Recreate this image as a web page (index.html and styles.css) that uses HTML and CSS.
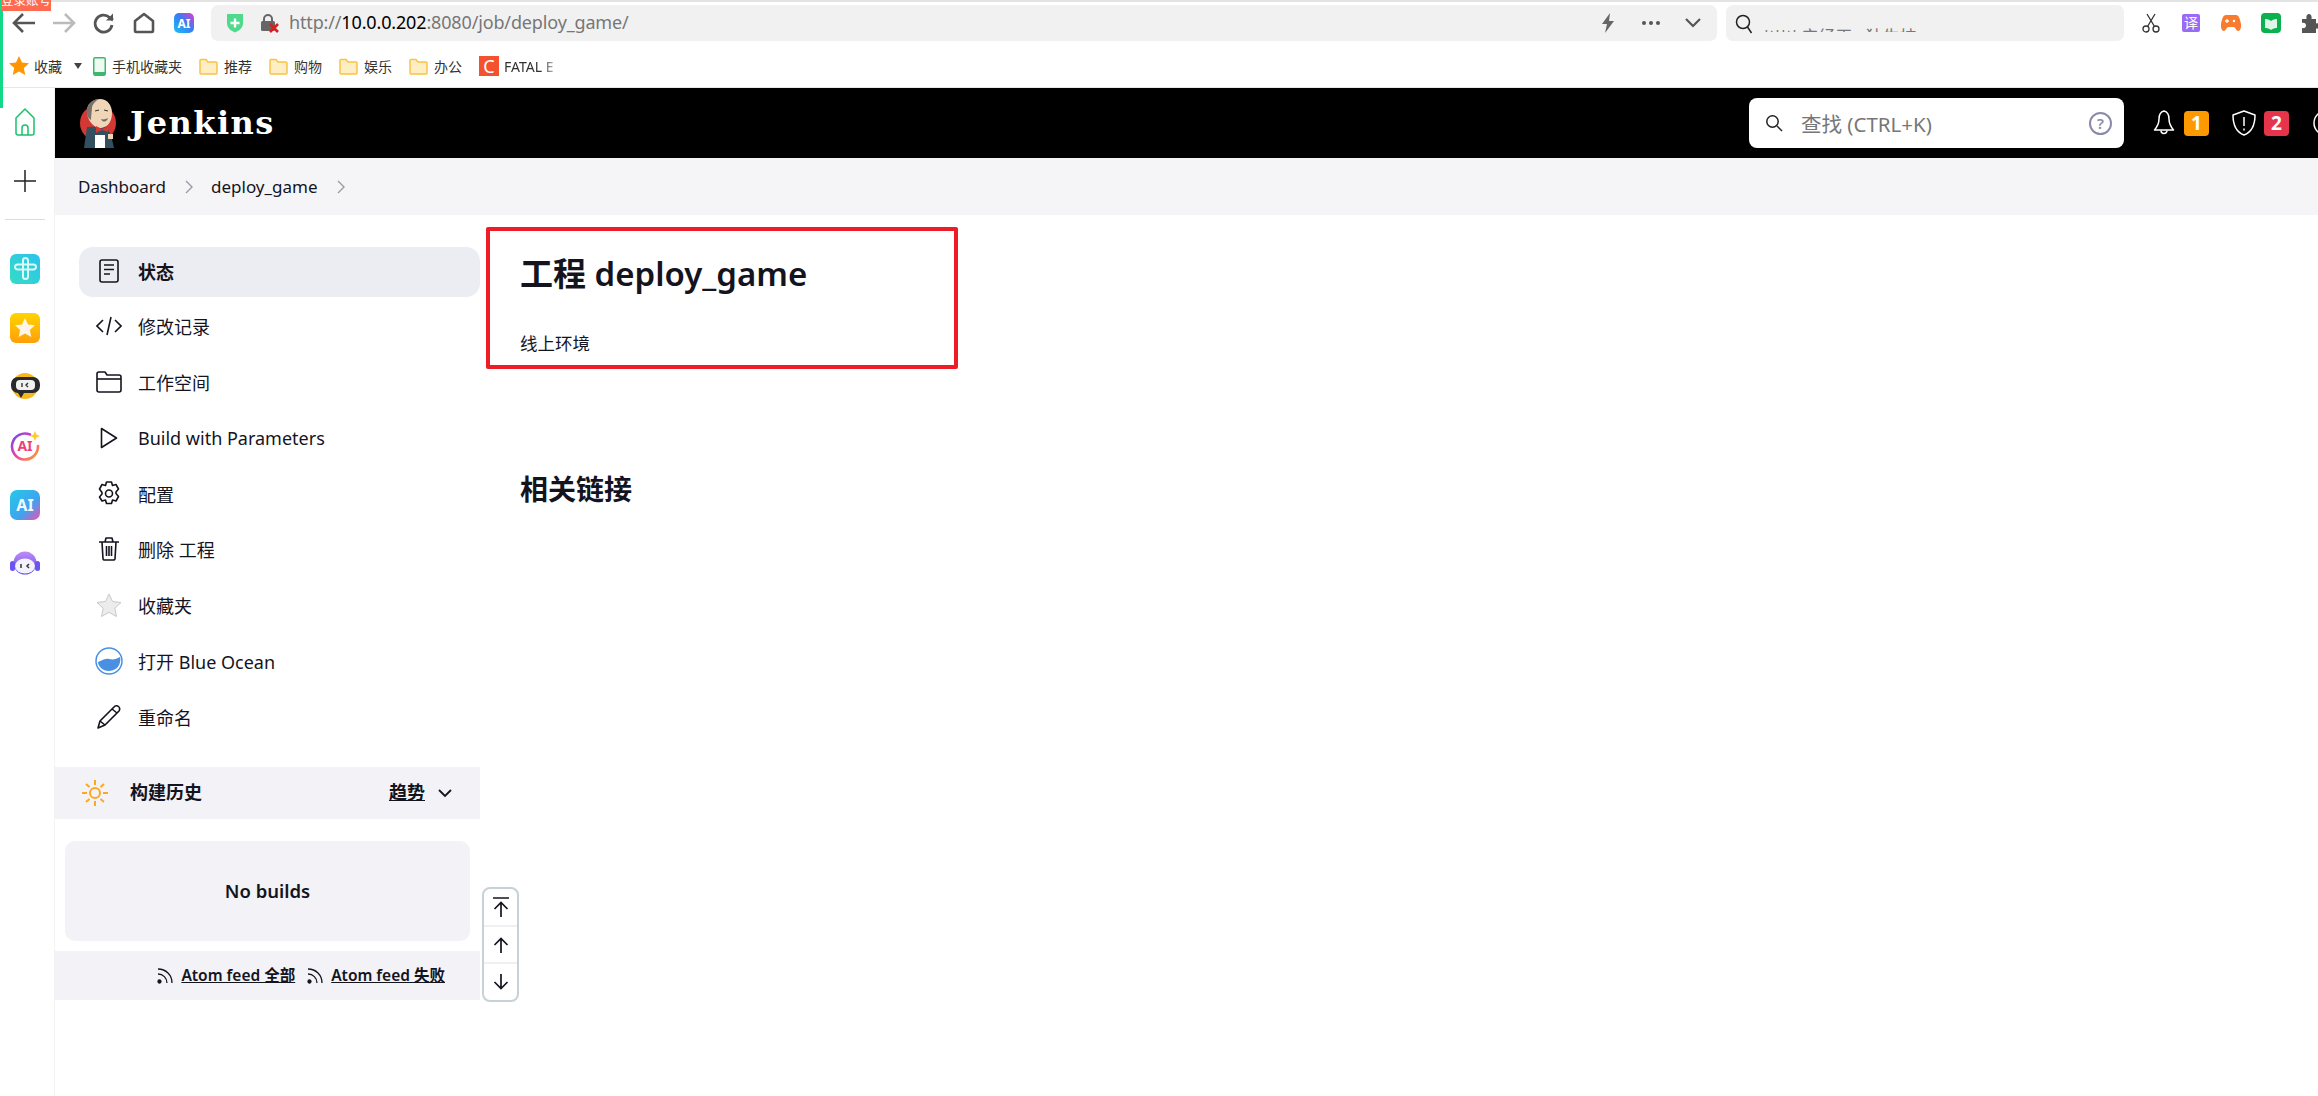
FILE: index.html
```html
<!DOCTYPE html>
<html lang="zh-CN">

<head>
  <meta charset="UTF-8">
  <title>deploy_game - Jenkins</title>
  <link rel="stylesheet" href="styles.css">
</head>

<body>
  <div class="stripe"></div>
  <div class="login-tag"><span>登录账号</span></div>

  <!-- browser toolbar -->
  <div class="toolbar">
    <span class="tb-btn">
      <svg width="28" height="24" viewBox="0 0 28 24" fill="none" stroke="#555" stroke-width="2.6"><path d="M25 12H4M13 3l-9 9 9 9"/></svg>
    </span>
    <span class="tb-btn">
      <svg width="28" height="24" viewBox="0 0 28 24" fill="none" stroke="#bbb" stroke-width="2.6"><path d="M3 12h21M15 3l9 9-9 9"/></svg>
    </span>
    <span class="tb-btn">
      <svg width="24" height="24" viewBox="0 0 24 24" fill="none" stroke="#555" stroke-width="2.8"><path d="M20 14a8.5 8.5 0 1 1-2.5-7.5L21 9"/><path d="M21 2.5v7h-7" fill="#555" stroke="none"/></svg>
    </span>
    <span class="tb-btn">
      <svg width="24" height="24" viewBox="0 0 24 24" fill="none" stroke="#555" stroke-width="2.6" stroke-linejoin="round"><path d="M12 3l9 7v10a1 1 0 0 1-1 1H4a1 1 0 0 1-1-1V10z"/></svg>
    </span>
    <span class="tb-btn">
      <svg width="20" height="20" viewBox="0 0 20 20"><defs><linearGradient id="aiA" x1="0" y1="1" x2="1" y2="0"><stop offset="0" stop-color="#16c3f0"/><stop offset=".55" stop-color="#3b7bf5"/><stop offset="1" stop-color="#e83bc8"/></linearGradient></defs><rect width="20" height="20" rx="5" fill="url(#aiA)"/><text x="10" y="14.5" text-anchor="middle" class="svg-ai" font-size="12" fill="#fff">AI</text></svg>
    </span>

    <div class="urlbar">
      <svg class="url-shield" width="18" height="20" viewBox="0 0 18 20"><path d="M1 1h16v9c0 5-4 8-8 9.5C5 18 1 15 1 10z" fill="#4fd98c"/><path d="M9 5.5v9M4.5 10h9" stroke="#fff" stroke-width="2.4"/></svg>
      <svg class="url-lock" width="20" height="20" viewBox="0 0 20 20"><path d="M4 8V6a4 4 0 0 1 8 0v2" fill="none" stroke="#666" stroke-width="2"/><rect x="1" y="8" width="14" height="10" rx="1.5" fill="#666"/><path d="M10 11l8 8M18 11l-8 8" stroke="#d81e1e" stroke-width="2.6"/></svg>
      <span class="url-text">http://<b>10.0.0.202</b>:8080/job/deploy_game/</span>
      <svg class="url-bolt" width="14" height="20" viewBox="0 0 14 20"><path d="M9 0L1 11h5l-2 9 9-12H8z" fill="#666"/></svg>
      <span class="url-dots"><i></i><i></i><i></i></span>
      <svg class="url-chev" width="16" height="10" viewBox="0 0 16 10" fill="none" stroke="#555" stroke-width="2.2"><path d="M1 1l7 7 7-7"/></svg>
    </div>

    <div class="searchbar">
      <svg width="18" height="20" viewBox="0 0 18 20" fill="none" stroke="#222" stroke-width="1.5"><circle cx="8" cy="8" r="6.5"/><path d="M12.5 13l4 6"/></svg>
      <span class="search-clip"><span>川川 产经天 · 独生技</span></span>
    </div>

    <div class="extensions">
      <span class="tb-btn">
        <svg width="18" height="20" viewBox="0 0 18 20" fill="none" stroke="#333" stroke-width="1.3"><circle cx="4" cy="16" r="3"/><circle cx="14" cy="16" r="3"/><path d="M5.5 13.5L13 1M12.5 13.5L5 1"/></svg>
      </span>
      <span class="tb-btn">
        <span class="ext-fanyi">译</span>
      </span>
      <span class="tb-btn">
        <svg width="20" height="18" viewBox="0 0 20 18"><path d="M5 1h10c3 0 4 4 5 9 .5 4-1 7-3 7-1.500 0-3-4-4-4H7c-1 0-2.500 4-4 4-2 0-3.500-3-3-7C1 5 2 1 5 1z" fill="#f97b2d"/><path d="M6 5v4M4 7h4" stroke="#fff" stroke-width="1.3"/><circle cx="13" cy="7" r="1.2" fill="#fff"/></svg>
      </span>
      <span class="tb-btn">
        <svg width="20" height="20" viewBox="0 0 20 20"><rect width="20" height="20" rx="4" fill="#0bb04f"/><path d="M4 6c2 0 4 .5 6 2 2-1.500 4-2 6-2v9c-2 0-4 .5-6 2-2-1.500-4-2-6-2z" fill="#dff5e6"/></svg>
      </span>
      <span class="tb-btn">
        <svg width="20" height="20" viewBox="0 0 20 20"><path d="M1 6h4.500C5 3 6 1 8 1s3 2 2.500 5H15v4.500c3-.5 5 .5 5 2.500s-2 3-5 2.500V20H1v-5c2.500.5 4-.5 4-2.500S3.500 9.500 1 10z" fill="#555"/></svg>
      </span>
    </div>
  </div>

  <!-- bookmarks -->
  <div class="bookmarks">
    <span class="bm bm-fav">
      <svg width="20" height="20" viewBox="0 0 20 20"><path d="M10 0l3 6.5 7 .8-5.200 4.700 1.500 7L10 15.500 3.700 19l1.500-7L0 7.300l7-.8z" fill="#ff9500"/></svg>
      收藏
    </span>
    <span class="bm-caret"></span>
    <span class="bm bm-phone">
      <svg width="13" height="19" viewBox="0 0 13 19"><rect x=".75" y=".75" width="11.5" height="17.5" rx="1.5" fill="#eefaf2" stroke="#3cb96f" stroke-width="1.5"/><rect x="1" y="15" width="11" height="3" fill="#3cb96f"/></svg>
      手机收藏夹
    </span>
    <span class="bm"><svg class="bm-folder" width="19" height="17" viewBox="0 0 19 17"><path d="M1 2.500a1 1 0 0 1 1-1h5l2 2.500h8a1 1 0 0 1 1 1V15a1 1 0 0 1-1 1H2a1 1 0 0 1-1-1z" fill="#ffeec4" stroke="#f9c342" stroke-width="1.5"/></svg>推荐</span>
    <span class="bm"><svg class="bm-folder" width="19" height="17" viewBox="0 0 19 17"><path d="M1 2.500a1 1 0 0 1 1-1h5l2 2.500h8a1 1 0 0 1 1 1V15a1 1 0 0 1-1 1H2a1 1 0 0 1-1-1z" fill="#ffeec4" stroke="#f9c342" stroke-width="1.5"/></svg>购物</span>
    <span class="bm"><svg class="bm-folder" width="19" height="17" viewBox="0 0 19 17"><path d="M1 2.500a1 1 0 0 1 1-1h5l2 2.500h8a1 1 0 0 1 1 1V15a1 1 0 0 1-1 1H2a1 1 0 0 1-1-1z" fill="#ffeec4" stroke="#f9c342" stroke-width="1.5"/></svg>娱乐</span>
    <span class="bm"><svg class="bm-folder" width="19" height="17" viewBox="0 0 19 17"><path d="M1 2.500a1 1 0 0 1 1-1h5l2 2.500h8a1 1 0 0 1 1 1V15a1 1 0 0 1-1 1H2a1 1 0 0 1-1-1z" fill="#ffeec4" stroke="#f9c342" stroke-width="1.5"/></svg>办公</span>
    <span class="bm bm-fatal"><span class="bm-c">C</span><span class="bm-fade">FATAL E</span></span>
  </div>

  <div class="page">
    <!-- browser side rail -->
    <nav class="rail">
      <span class="rail-home">
        <svg width="22" height="30" viewBox="0 0 22 30" fill="none" stroke="#19c26b" stroke-width="1.5" stroke-linejoin="round"><path d="M11 2l9 9v15a2 2 0 0 1-2 2H4a2 2 0 0 1-2-2V11z"/><path d="M8 28v-7a3 3 0 0 1 6 0v7"/></svg>
      </span>
      <span class="rail-plus">
        <svg width="22" height="22" viewBox="0 0 22 22" stroke="#222" stroke-width="1.5"><path d="M11 0v22M0 11h22"/></svg>
      </span>
      <span class="rail-line"></span>
      <span class="rail-app">
        <svg width="30" height="30" viewBox="0 0 30 30"><defs><linearGradient id="r1" x1="0" y1="1" x2="1" y2="0"><stop offset="0" stop-color="#35dcc4"/><stop offset="1" stop-color="#2cc2ef"/></linearGradient></defs><rect width="30" height="30" rx="6" fill="url(#r1)"/><path d="M13 6.500a2.500 2.500 0 0 1 5 0v16a2.500 2.500 0 0 1-5 0zM5 13a2.500 2.500 0 0 1 2.500-2.500h16a2.500 2.500 0 0 1 0 5h-16A2.500 2.500 0 0 1 5 13z" fill="none" stroke="#d8fbf6" stroke-width="2"/></svg>
      </span>
      <span class="rail-app">
        <svg width="30" height="30" viewBox="0 0 30 30"><defs><linearGradient id="r2" x1="0" y1="0" x2="0" y2="1"><stop offset="0" stop-color="#ffd400"/><stop offset="1" stop-color="#ff9f0a"/></linearGradient></defs><rect width="30" height="30" rx="6" fill="url(#r2)"/><path d="M15 5l3 6.500 7 .8-5.200 4.700 1.500 7L15 20.500 8.700 24l1.500-7L5 12.300l7-.8z" fill="#fdf6e8"/></svg>
      </span>
      <span class="rail-app">
        <svg width="30" height="30" viewBox="0 0 30 30"><circle cx="15" cy="14" r="13" fill="#f7b71d"/><rect x="1" y="5" width="29" height="16" rx="7" fill="#2a2a2c"/><path d="M8 21l3 5 3-5z" fill="#2a2a2c"/><rect x="6" y="8" width="19" height="10" rx="4" fill="#f1f1f1"/><path d="M12 11v4M18 11l-2 2 2 2" stroke="#333" stroke-width="1.4" fill="none"/></svg>
      </span>
      <span class="rail-app">
        <svg width="30" height="30" viewBox="0 0 30 30"><defs><linearGradient id="r4" x1="0" y1="0" x2="1" y2="1"><stop offset="0" stop-color="#6a4cf0"/><stop offset=".5" stop-color="#f03ca8"/><stop offset="1" stop-color="#ffa726"/></linearGradient></defs><path d="M20 3.500A13 13 0 1 0 28 15" fill="none" stroke="url(#r4)" stroke-width="2.6" stroke-linecap="round"/><text x="15" y="20" text-anchor="middle" class="svg-ai" font-size="14" fill="#ec3f7e">AI</text><path d="M25 0l1.500 3.500L30 5l-3.500 1.500L25 10l-1.500-3.500L20 5l3.500-1.500z" fill="#ffcb2e"/></svg>
      </span>
      <span class="rail-app">
        <svg width="30" height="30" viewBox="0 0 30 30"><defs><linearGradient id="r5" x1="0" y1="0" x2="1" y2="1"><stop offset="0" stop-color="#25c9e8"/><stop offset=".6" stop-color="#3fa3f0"/><stop offset="1" stop-color="#f24fb0"/></linearGradient></defs><rect width="30" height="30" rx="7" fill="url(#r5)"/><text x="15" y="21" text-anchor="middle" class="svg-ai" font-size="16" fill="#f2f8ff">AI</text></svg>
      </span>
      <span class="rail-app">
        <svg width="30" height="30" viewBox="0 0 30 30"><defs><linearGradient id="r6" x1="0" y1="0" x2="0" y2="1"><stop offset="0" stop-color="#c08cf5"/><stop offset="1" stop-color="#5a4cf0"/></linearGradient></defs><circle cx="15" cy="14" r="11.5" fill="url(#r6)"/><rect x="0" y="12" width="5" height="10" rx="2.5" fill="#6a55f0"/><rect x="25" y="12" width="5" height="10" rx="2.5" fill="#6a55f0"/><ellipse cx="15" cy="17" rx="10" ry="7.500" fill="#f4f2fb"/><path d="M11 15v4M19 15l-2 2 2 2" stroke="#333" stroke-width="1.5" fill="none"/></svg>
      </span>
    </nav>

    <div class="jenkins">
      <header class="jk-header">
        <svg class="jk-logo" width="36" height="50" viewBox="9 5 36 50">
          <circle cx="27" cy="30" r="18" fill="#d33833"/>
          <path d="M16 34l-3 21h30l-3-13-5-9z" fill="#335061"/>
          <path d="M16 20C15 11 22 6 29 6c7 0 12 6 12 14 0 7-3 14-11 15-6 .5-13-6-14-15z" fill="#f0d6b7"/>
          <path d="M16 22C14 12 22 6 28 6c-4 2-6 5-7 8 0 4-1 8-1 13-2-1-3-3-4-5z" fill="#77726c"/>
          <path d="M24 18l4-1M33 17l4 1" stroke="#333" stroke-width="1"/>
          <path d="M30 26c3 1 5 0 7-1-1 4-5 5-7 1z" fill="#6d6b6d"/>
          <path d="M25 33l6 3 6-3v6l-6-2-6 3z" fill="#d33833"/>
          <rect x="24" y="42" width="10" height="13" fill="#fff"/>
          <path d="M37 41h5v5h-5z" fill="#f0d6b7"/>
        </svg>
        <span class="jk-title">Jenkins</span>

        <div class="jk-search">
          <svg width="18" height="18" viewBox="0 0 18 18" fill="none" stroke="#222" stroke-width="1.5"><circle cx="7.500" cy="7.500" r="5.700"/><path d="M12 12l5 5"/></svg>
          <span class="jk-placeholder">查找 (CTRL+K)</span>
          <span class="jk-help">?</span>
        </div>

        <svg class="jk-bell" width="22" height="26" viewBox="0 0 22 26" fill="none" stroke="#fff" stroke-width="1.5" stroke-linejoin="round"><path d="M11 1c-4 1-5 4-5 8 0 5-2 8-4.500 11h19C18 17 16 14 16 9c0-4-1-7-5-8z"/><path d="M8 20.500a3 3 0 0 0 6 0"/></svg>
        <span class="jk-badge badge-orange">1</span>
        <svg class="jk-shield" width="26" height="26" viewBox="0 0 26 26" fill="none" stroke="#fff" stroke-width="1.5" stroke-linejoin="round"><path d="M13 1l11 4c0 10-3 17-11 20C5 22 2 15 2 5z"/><path d="M13 7v9M13 18.500v2"/></svg>
        <span class="jk-badge badge-red">2</span>
        <svg class="jk-user" width="26" height="26" viewBox="0 0 26 26" fill="none" stroke="#fff" stroke-width="1.5"><circle cx="13" cy="13" r="12"/></svg>
      </header>

      <div class="breadcrumb">
        <span>Dashboard</span>
        <svg width="9" height="14" viewBox="0 0 9 14" fill="none" stroke="#9a9aa8" stroke-width="1.4"><path d="M1 1l6 6-6 6"/></svg>
        <span>deploy_game</span>
        <svg width="9" height="14" viewBox="0 0 9 14" fill="none" stroke="#9a9aa8" stroke-width="1.4"><path d="M1 1l6 6-6 6"/></svg>
      </div>

      <div class="content-wrap">
        <aside class="sidebar">
          <ul class="tasks">
            <li class="task active">
              <span class="task-icon"><svg width="20" height="24" viewBox="0 0 20 24" fill="none" stroke="#14141f" stroke-width="1.6"><rect x="1" y="1" width="18" height="22" rx="2"/><path d="M5 6h10M5 10.500h10M5 15h6"/></svg></span>
              状态
            </li>
            <li class="task">
              <span class="task-icon"><svg width="26" height="20" viewBox="0 0 26 20" fill="none" stroke="#14141f" stroke-width="1.6"><path d="M7 4l-6 6 6 6M19 4l6 6-6 6M15 1l-4 18"/></svg></span>
              修改记录
            </li>
            <li class="task">
              <span class="task-icon"><svg width="26" height="22" viewBox="0 0 26 22" fill="none" stroke="#14141f" stroke-width="1.6" stroke-linejoin="round"><path d="M1 3a2 2 0 0 1 2-2h6l2 3h12a2 2 0 0 1 2 2v13a2 2 0 0 1-2 2H3a2 2 0 0 1-2-2z"/><path d="M1 8h24"/></svg></span>
              工作空间
            </li>
            <li class="task">
              <span class="task-icon"><svg width="18" height="22" viewBox="0 0 18 22" fill="none" stroke="#14141f" stroke-width="1.6" stroke-linejoin="round"><path d="M1.500 1.500L16.500 11 1.500 20.500z"/></svg></span>
              Build with Parameters
            </li>
            <li class="task">
              <span class="task-icon"><svg width="24" height="25" viewBox="0 0 24 25" fill="none" stroke="#14141f" stroke-width="1.6" stroke-linejoin="round"><path d="M9.500 1h5l1 3.500 3.500-1 2.500 4.500-2.500 3 0 1.500 2.500 3-2.500 4.500-3.500-1-1 3.500h-5l-1-3.500-3.500 1L2.500 16l2.500-3v-1.500L2.500 8 5 3.500l3.500 1z"/><circle cx="12" cy="12.500" r="3.500"/></svg></span>
              配置
            </li>
            <li class="task">
              <span class="task-icon"><svg width="20" height="24" viewBox="0 0 20 24" fill="none" stroke="#14141f" stroke-width="1.6" stroke-linejoin="round"><path d="M0 5h20M6 5l1-4h6l1 4M3 5l1 17a1.500 1.500 0 0 0 1.500 1h9a1.500 1.500 0 0 0 1.500-1l1-17M7.500 9v10M10 9v10M12.500 9v10"/></svg></span>
              删除 工程
            </li>
            <li class="task">
              <span class="task-icon"><svg width="26" height="24" viewBox="0 0 26 24"><path d="M13 1l3.600 7.500 8.400 1-6.200 5.700 1.700 8.300L13 19.400 5.500 23.500l1.700-8.300L1 9.500l8.400-1z" fill="#ececec" stroke="#c9c9c9"/></svg></span>
              收藏夹
            </li>
            <li class="task">
              <span class="task-icon"><svg width="28" height="28" viewBox="0 0 28 28"><circle cx="14" cy="14" r="13" fill="#fff" stroke="#4a90e2" stroke-width="1.5"/><path d="M3 15c4-1 6-4 11-3s7 0 11-2c1 3 0 8-3 11-5 4-12 4-16 0-2-2-3-4-3-6z" fill="#4a90e2"/></svg></span>
              打开 Blue Ocean
            </li>
            <li class="task">
              <span class="task-icon"><svg width="24" height="24" viewBox="0 0 24 24" fill="none" stroke="#14141f" stroke-width="1.6" stroke-linejoin="round"><path d="M1 23l2-7L17 2a3 3 0 0 1 5 4L8 20z"/><path d="M15 4l5 4M3 16l5 4"/></svg></span>
              重命名
            </li>
          </ul>

          <div class="history-bar">
            <svg width="28" height="28" viewBox="0 0 28 28" fill="none" stroke="#ffa81e" stroke-width="2"><circle cx="14" cy="14" r="5"/><path d="M14 1v5M14 22v5M1 14h5M22 14h5M5 5l3.500 3M23 5l-3.500 3M5 23l3.500-3M23 23l-3.500-3"/></svg>
            <span class="history-title">构建历史</span>
            <span class="history-trend">趋势</span>
            <svg width="14" height="9" viewBox="0 0 14 9" fill="none" stroke="#14141f" stroke-width="1.8"><path d="M1 1l6 6 6-6"/></svg>
          </div>

          <div class="no-builds">No builds</div>

          <div class="feeds">
            <svg width="17" height="17" viewBox="0 0 17 17" fill="none" stroke="#14141f" stroke-width="1.3"><circle cx="2.500" cy="14.500" r="1.500" fill="#14141f"/><path d="M1 7c5 0 9 4 9 9M1 2c8 0 14 6 14 14"/></svg>
            <a class="feed-link">Atom feed 全部</a>
            <svg class="feed-second" width="17" height="17" viewBox="0 0 17 17" fill="none" stroke="#14141f" stroke-width="1.3"><circle cx="2.500" cy="14.500" r="1.500" fill="#14141f"/><path d="M1 7c5 0 9 4 9 9M1 2c8 0 14 6 14 14"/></svg>
            <a class="feed-link">Atom feed 失败</a>
          </div>
        </aside>

        <main class="content">
          <h1 class="job-title">工程 deploy_game</h1>
          <p class="job-desc">线上环境</p>
          <h2 class="links-title">相关链接</h2>

          <div class="red-box"></div>

          <div class="scroll-widget">
            <span class="scroll-btn"><svg width="16" height="20" viewBox="0 0 16 20" fill="none" stroke="#14141f" stroke-width="1.7"><path d="M0 1h16M8 20V6M1.500 12L8 5.500 14.500 12"/></svg></span>
            <span class="scroll-btn"><svg width="16" height="16" viewBox="0 0 16 16" fill="none" stroke="#14141f" stroke-width="1.7"><path d="M8 16V2M1.500 8L8 1.500 14.500 8"/></svg></span>
            <span class="scroll-btn"><svg width="16" height="16" viewBox="0 0 16 16" fill="none" stroke="#14141f" stroke-width="1.7"><path d="M8 0v14M1.500 8L8 14.500 14.500 8"/></svg></span>
          </div>
        </main>
      </div>
    </div>
  </div>
</body>

</html>
```

FILE: styles.css
```css
* {
  box-sizing: border-box;
}

html,
body {
  height: 100%;
}

body {
  margin: 0;
  overflow: hidden;
  background: #fff;
  color: #14141f;
  font-family: "Noto Sans", "Noto Sans CJK SC", sans-serif;
}

.svg-ai {
  font-family: "Noto Sans", sans-serif;
  font-weight: 700;
}

/* little bits stuck over the browser frame */
.stripe {
  position: absolute;
  left: 0;
  top: 0;
  width: 3px;
  height: 108px;
  background: #12d987;
  z-index: 3;
}

.login-tag {
  position: absolute;
  left: 2px;
  top: 0;
  width: 49px;
  height: 11px;
  overflow: hidden;
  background: #ff6a50;
  z-index: 4;
  color: #fff;
  font-size: 12.5px;
  line-height: 14px;
  white-space: nowrap;
}

.login-tag span {
  display: block;
  margin-left: -1px;
  margin-top: -6px;
}

/* toolbar */
.toolbar {
  display: flex;
  align-items: center;
  height: 47px;
  padding-left: 4px;
  padding-bottom: 3px;
  border-top: 2px solid #e3e3e3;
}

.tb-btn {
  display: flex;
  align-items: center;
  justify-content: center;
  flex: none;
  width: 40px;
  height: 36px;
}

.urlbar {
  display: flex;
  align-items: center;
  flex: none;
  width: 1506px;
  height: 36px;
  margin-left: 7px;
  padding-left: 15px;
  background: #f1f1f1;
  border-radius: 7px;
}

.url-lock {
  margin-left: 16px;
}

.url-text {
  margin-left: 9px;
  padding-bottom: 2px;
  font-size: 18px;
  letter-spacing: -0.15px;
  color: #777;
  white-space: nowrap;
}

.url-text b {
  font-weight: 400;
  color: #000;
}

.url-bolt {
  margin-left: auto;
}

.url-dots {
  display: flex;
  gap: 3px;
  margin-left: 27px;
}

.url-dots i {
  width: 4px;
  height: 4px;
  border-radius: 50%;
  background: #555;
}

.url-chev {
  margin-left: 25px;
  margin-right: 16px;
}

.searchbar {
  display: flex;
  align-items: flex-start;
  flex: none;
  width: 398px;
  height: 36px;
  margin-left: 9px;
  padding: 9px 0 0 9px;
  background: #f1f1f1;
  border-radius: 7px;
}

.search-clip {
  display: block;
  width: 160px;
  height: 4px;
  margin: 14px 0 0 10px;
  overflow: hidden;
  font-size: 17px;
  line-height: 24px;
  color: #777;
  white-space: nowrap;
}

.search-clip span {
  display: block;
  margin-top: -3px;
}

.extensions {
  display: flex;
  flex: none;
  margin-left: 7px;
}

.ext-fanyi {
  display: block;
  width: 18px;
  height: 18px;
  border-radius: 2px;
  background: #9a6cf5;
  color: #fff;
  font-size: 14px;
  line-height: 18px;
  text-align: center;
}

/* bookmarks */
.bookmarks {
  display: flex;
  align-items: center;
  height: 41px;
  padding-left: 9px;
  padding-bottom: 2px;
  border-bottom: 1px solid #e6e6e6;
  font-size: 14px;
  color: #333;
}

.bm {
  display: flex;
  align-items: center;
  flex: none;
  margin-right: 17px;
  white-space: nowrap;
}

.bm-fav {
  gap: 5px;
  margin-right: 12px;
}

.bm-caret {
  width: 0;
  height: 0;
  margin-right: 11px;
  border-left: 4px solid transparent;
  border-right: 4px solid transparent;
  border-top: 6px solid #444;
}

.bm-phone {
  gap: 6px;
  margin-right: 17px;
}

.bm-folder {
  margin-right: 6px;
}

.bm-c {
  display: block;
  width: 20px;
  height: 20px;
  margin-right: 5px;
  background: #f4522e;
  color: #fff;
  font-size: 18px;
  line-height: 20px;
  text-align: center;
}

.bm-fade {
  width: 53px;
  overflow: hidden;
  -webkit-mask-image: linear-gradient(to right, #000 70%, rgba(0, 0, 0, 0.2));
  mask-image: linear-gradient(to right, #000 70%, rgba(0, 0, 0, 0.2));
}

/* page below the browser bars */
.page {
  display: flex;
  height: 1008px;
}

.rail {
  display: flex;
  flex-direction: column;
  align-items: center;
  flex: none;
  width: 55px;
  padding: 19px 5px 0 0;
  border-right: 1px solid #f2f2f2;
}

.rail-home,
.rail-plus {
  display: flex;
  align-items: center;
  justify-content: center;
  height: 30px;
}

.rail-plus {
  margin-top: 29px;
}

.rail-line {
  width: 40px;
  height: 1px;
  margin-top: 23px;
  margin-bottom: 5px;
  background: #ddd;
}

.rail-app {
  display: block;
  width: 30px;
  height: 30px;
  margin-top: 29px;
}

.jenkins {
  flex: 1;
  min-width: 0;
}

.jk-header {
  display: flex;
  align-items: center;
  height: 70px;
  padding-left: 25px;
  background: #000;
}

.jk-title {
  margin-left: 14px;
  font-family: "DejaVu Serif", serif;
  font-size: 32px;
  font-weight: 700;
  letter-spacing: 1.5px;
  color: #fff;
}

.jk-search {
  display: flex;
  align-items: center;
  flex: none;
  width: 375px;
  height: 50px;
  margin-left: auto;
  padding: 0 12px 0 16px;
  background: #fff;
  border-radius: 8px;
}

.jk-placeholder {
  margin-left: 18px;
  font-size: 20.5px;
  color: #777;
}

.jk-help {
  width: 23px;
  height: 23px;
  margin-left: auto;
  border: 2px solid #8a8aa8;
  border-radius: 50%;
  color: #8a8aa8;
  font-size: 15px;
  font-weight: 600;
  line-height: 19px;
  text-align: center;
}

.jk-bell {
  flex: none;
  margin-left: 29px;
}

.jk-badge {
  flex: none;
  width: 25px;
  height: 25px;
  border-radius: 4px;
  color: #fff;
  font-size: 19px;
  font-weight: 700;
  line-height: 25px;
  text-align: center;
}

.badge-orange {
  margin-left: 9px;
  background: #fe9a00;
}

.badge-red {
  margin-left: 7px;
  background: #e6354b;
}

.jk-shield {
  flex: none;
  margin-left: 22px;
}

.jk-user {
  flex: none;
  margin-left: 24px;
  margin-right: -21px;
}

.breadcrumb {
  display: flex;
  align-items: center;
  height: 57px;
  padding-left: 23px;
  background: #f5f5f7;
  font-size: 17px;
  color: #14141f;
}

.breadcrumb svg {
  margin: 0 17px 0 19px;
}

.content-wrap {
  display: flex;
}

/* sidebar */
.sidebar {
  flex: none;
  width: 425px;
}

.tasks {
  display: flex;
  flex-direction: column;
  gap: 5.75px;
  margin: 0;
  padding: 32px 0 0 24px;
  list-style: none;
}

.task {
  display: flex;
  align-items: center;
  gap: 14px;
  height: 50px;
  padding-left: 15px;
  padding-bottom: 3px;
  border-radius: 14px;
  font-size: 18px;
}

.task.active {
  background: #ecedf2;
  font-weight: 700;
}

.task-icon {
  display: flex;
  align-items: center;
  justify-content: center;
  width: 30px;
}

.history-bar {
  display: flex;
  align-items: center;
  height: 52px;
  margin-top: 24px;
  padding: 0 28px 0 26px;
  background: #f2f2f7;
  font-size: 18px;
  font-weight: 700;
}

.history-title {
  margin-left: 21px;
  margin-bottom: 4px;
}

.history-trend {
  margin-left: auto;
  margin-right: 13px;
  margin-bottom: 4px;
  text-decoration: underline;
}

.no-builds {
  display: flex;
  align-items: center;
  justify-content: center;
  height: 100px;
  margin: 22px 10px 10px;
  padding-bottom: 2px;
  background: #f2f2f7;
  border-radius: 10px;
  font-size: 18.5px;
  font-weight: 600;
}

.feeds {
  display: flex;
  align-items: center;
  justify-content: flex-end;
  gap: 7px;
  height: 49px;
  padding-right: 35px;
  background: #f2f2f7;
}

.feed-link {
  margin-bottom: 3px;
  font-size: 15.5px;
  font-weight: 600;
  color: #14141f;
  text-decoration: underline;
}

.feed-second {
  margin-left: 5px;
}

/* main column */
.content {
  position: relative;
  flex: 1;
  padding: 39px 0 0 40px;
}

.job-title {
  margin: 0;
  font-size: 33px;
  font-weight: 600;
  line-height: 40px;
}

.job-desc {
  margin: 37px 0 0;
  font-size: 17.5px;
  line-height: 24px;
}

.links-title {
  margin: 116px 0 0;
  font-size: 28px;
  font-weight: 700;
  line-height: 36px;
}

/* annotation drawn on top of the screenshot */
.red-box {
  position: absolute;
  left: 6px;
  top: 12px;
  width: 472px;
  height: 142px;
  border: 4px solid #ee1c25;
  border-radius: 2px;
}

.scroll-widget {
  position: absolute;
  left: 2px;
  top: 672px;
  display: flex;
  flex-direction: column;
  width: 37px;
  height: 115px;
  background: #fff;
  border: 2px solid #c6d2d6;
  border-radius: 8px;
}

.scroll-btn {
  display: flex;
  align-items: center;
  justify-content: center;
  flex: 1;
  border-bottom: 2px solid #eef0f1;
}

.scroll-btn:last-child {
  border-bottom: none;
}
```
